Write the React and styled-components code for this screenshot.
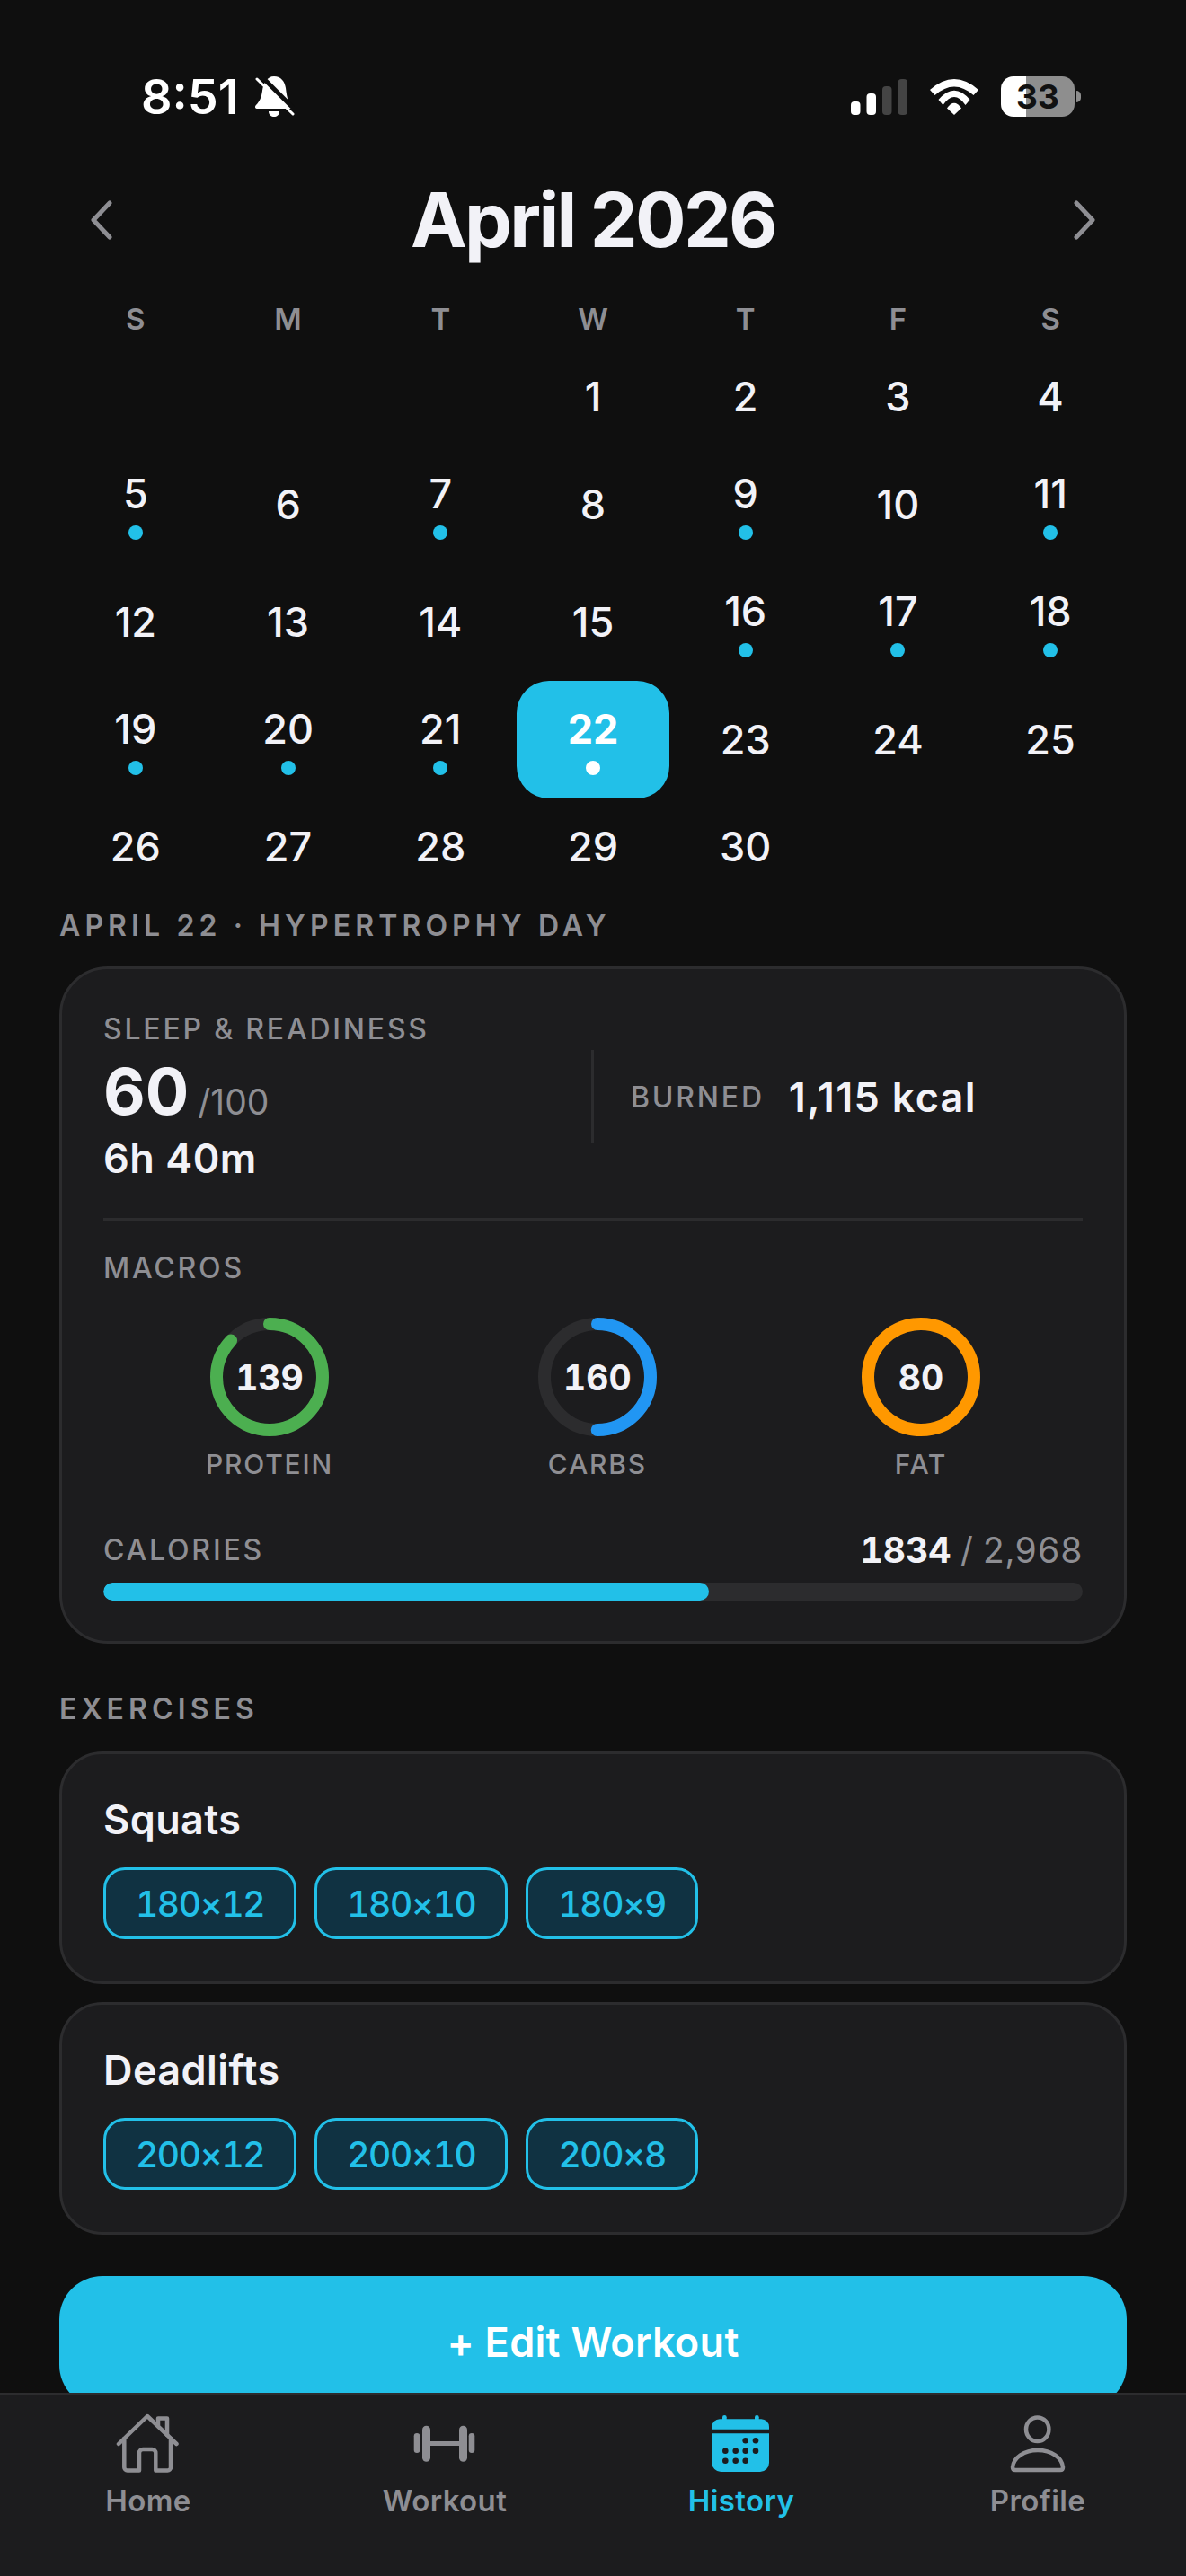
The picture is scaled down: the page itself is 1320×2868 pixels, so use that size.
import React from 'react';
import styled, { createGlobalStyle } from 'styled-components';

const ACCENT = '#22c0e8';
const MUTED = '#8e8e93';
const TEXT = '#f2f2f7';
const CARD = '#1c1c1e';
const LINE = '#2c2c2e';

const GlobalStyle = createGlobalStyle`
    html, body {
        margin: 0;
        padding: 0;
        background: #0f0f0f;
    }
    * {
        box-sizing: border-box;
    }
`

const Page = styled.div`
    position: relative;
    width: 1320px;
    height: 2868px;
    overflow: hidden;
    background: #0f0f0f;
    color: ${TEXT};
    font-family: Inter, "Liberation Sans", sans-serif;
`

const StatusBar = styled.div`
    display: flex;
    align-items: center;
    height: 131px;
    padding: 84px 124px 0 157px;
    color: #fff;
`

const Time = styled.span`
    font-size: 54px;
    line-height: 47px;
    font-weight: 600;
    margin-right: 18px;
`

const StatusIcons = styled.div`
    display: flex;
    align-items: center;
    gap: 25px;
    margin-left: auto;
`

const Battery = styled.div`
    position: relative;
    display: flex;
    align-items: center;
    justify-content: center;
    width: 82px;
    height: 45px;
    border-radius: 14px;
    background: linear-gradient(90deg, #fff 34%, #8e8e8e 34%);
    color: #111;
    font-size: 37px;
    font-weight: 700;

    &::after {
        content: '';
        position: absolute;
        right: -7px;
        top: 16px;
        width: 5px;
        height: 13px;
        border-radius: 0 5px 5px 0;
        background: #8e8e8e;
    }
`

const Content = styled.main`
    padding: 0 66px;
`

const MonthHeader = styled.header`
    display: flex;
    align-items: center;
    justify-content: space-between;
    height: 100px;
    margin-top: 64px;
    padding: 0 34px;
`

const MonthTitle = styled.h1`
    margin: 0;
    font-size: 84px;
    line-height: 100px;
    font-weight: 700;
    letter-spacing: -2.7px;
`

const WeekRow = styled.div`
    display: grid;
    grid-template-columns: repeat(7, 1fr);
    margin-top: 40px;
    text-align: center;
    color: ${MUTED};
    font-size: 33px;
    line-height: 40px;
    font-weight: 600;
`

const DayGrid = styled.div`
    display: grid;
    grid-template-columns: repeat(7, 1fr);
    margin-top: 13px;
`

const DayCell = styled.div`
    display: flex;
    flex-direction: column;
    align-items: center;
    justify-content: center;
    gap: 8px;
    padding: 27px 0;
    border-radius: 36px;
    background: ${p => (p.$selected ? ACCENT : 'transparent')};
    color: ${p => (p.$selected ? '#fff' : TEXT)};
    font-size: 45px;
    line-height: 54px;
    font-weight: ${p => (p.$selected ? 700 : 500)};
`

const DayDot = styled.span`
    width: 16px;
    height: 16px;
    margin-bottom: -1px;
    border-radius: 50%;
    background: ${p => (p.$selected ? '#fff' : ACCENT)};
`

const SectionLabel = styled.div`
    margin-top: ${p => p.$top}px;
    color: ${MUTED};
    font-size: 32px;
    line-height: 40px;
    font-weight: 600;
    letter-spacing: 5.1px;
`

const Card = styled.section`
    margin-top: ${p => p.$top}px;
    padding: ${p => p.$pad || 46}px 46px ${p => p.$padBottom || 45}px;
    background: ${CARD};
    border: 3px solid ${LINE};
    border-radius: ${p => p.$radius}px;
`

const CardLabel = styled.div`
    color: ${MUTED};
    font-size: 32px;
    line-height: 40px;
    font-weight: 500;
    letter-spacing: 2.8px;
`

const SleepRow = styled.div`
    display: flex;
    align-items: flex-start;
    margin-top: 6px;
`

const SleepBlock = styled.div`
    flex: 0 0 543px;
`

const Score = styled.div`
    display: flex;
    align-items: baseline;
    gap: 10px;
    height: 86px;
    font-size: 72px;
    line-height: 86px;
    font-weight: 700;

    span {
        color: ${MUTED};
        font-size: 39px;
        line-height: 1;
        font-weight: 400;
    }
`

const BigValue = styled.div`
    font-size: 45px;
    line-height: 54px;
    font-weight: 600;
    letter-spacing: ${p => p.$spacing || 0}px;
    margin-top: ${p => p.$top || 0}px;
`

const VerticalRule = styled.div`
    flex: none;
    width: 3px;
    height: 104px;
    margin-top: -3px;
    background: ${LINE};
`

const BurnedBlock = styled.div`
    flex: 1;
    display: flex;
    align-items: center;
    gap: 27px;
    height: 104px;
    padding-left: 41px;
    margin-top: -2px;
`

const Rule = styled.div`
    height: 3px;
    margin: 39px 0 33px;
    background: ${LINE};
`

const Rings = styled.div`
    display: flex;
    justify-content: space-around;
    margin-top: 35px;
`

const RingItem = styled.div`
    display: flex;
    flex-direction: column;
    align-items: center;
`

const RingBox = styled.div`
    position: relative;
    width: 132px;
    height: 132px;
`

const RingValue = styled.div`
    position: absolute;
    inset: 0;
    display: flex;
    align-items: center;
    justify-content: center;
    font-size: 39px;
    font-weight: 700;
    font-variant-numeric: tabular-nums;
`

const RingLabel = styled.div`
    margin-top: 13px;
    color: ${MUTED};
    font-size: 30px;
    line-height: 36px;
    font-weight: 500;
    letter-spacing: 1.8px;
`

const CaloriesRow = styled.div`
    display: flex;
    align-items: center;
    justify-content: space-between;
    margin-top: 58px;
`

const CaloriesValue = styled.div`
    color: ${MUTED};
    font-size: 39px;
    line-height: 40px;
    font-weight: 400;
    font-variant-numeric: tabular-nums;

    b {
        color: ${TEXT};
        font-weight: 700;
    }
`

const Track = styled.div`
    height: 20px;
    margin-top: 16px;
    border-radius: 10px;
    overflow: hidden;
    background: ${LINE};
`

const TrackFill = styled.div`
    height: 100%;
    border-radius: 10px;
    background: ${ACCENT};
`

const ExerciseName = styled.div`
    font-size: 45px;
    line-height: 54px;
    font-weight: 600;
    letter-spacing: 0.4px;
`

const Chips = styled.div`
    display: flex;
    gap: 20px;
    margin-top: 26px;
`

const Chip = styled.div`
    display: flex;
    align-items: center;
    height: 80px;
    padding: 0 33px;
    border: 3px solid ${ACCENT};
    border-radius: 24px;
    background: #103242;
    color: ${ACCENT};
    font-size: 39px;
    font-weight: 500;
    font-variant-numeric: tabular-nums;
    letter-spacing: -1.4px;
`

const EditButton = styled.button`
    display: block;
    width: 100%;
    height: 147px;
    margin-top: 46px;
    padding: 0;
    border: none;
    border-radius: 48px;
    background: ${ACCENT};
    color: #fff;
    font-family: inherit;
    font-size: 45px;
    font-weight: 600;
    letter-spacing: 0.3px;
`

const TabBar = styled.nav`
    position: absolute;
    left: 0;
    right: 0;
    bottom: 0;
    display: grid;
    grid-template-columns: repeat(4, 1fr);
    height: 204px;
    padding-top: 17px;
    background: ${CARD};
    border-top: 3px solid ${LINE};
`

const Tab = styled.div`
    display: flex;
    flex-direction: column;
    align-items: center;
    color: ${p => (p.$active ? ACCENT : MUTED)};
    font-size: 33px;
    line-height: 40px;
    font-weight: 600;
    letter-spacing: 0.4px;

    span {
        margin-top: 8px;
    }
`

const Chevron = ({ flip }) => (
    <svg width="26" height="44" viewBox="0 0 26 44" fill="none" stroke={MUTED} strokeWidth="5" strokeLinecap="round" strokeLinejoin="round">
        <path d={flip ? 'M4 3l18 19L4 41' : 'M22 3L4 22l18 19'} />
    </svg>
);

const BellOff = () => (
    <svg width="44" height="47" viewBox="0 0 44 47">
        <path fill="#fff" d="M21 1c8 0 12 6 13 13 1 8 2 15 6 19 2 2 1 4-1 4H3c-3 0-4-2-2-4 4-4 6-9 7-16C9 9 13 1 21 1z" />
        <path fill="#fff" d="M15 40h12c0 4-3 6-6 6s-6-2-6-6z" />
        <path stroke="#0f0f0f" strokeWidth="5" d="M6 0l41 41" />
        <path stroke="#fff" strokeWidth="3" strokeLinecap="round" d="M2 4l40 39" />
    </svg>
);

const Signal = () => (
    <svg width="63" height="40" viewBox="0 0 63 40">
        <rect x="0" y="25" width="10.5" height="15" rx="4" fill="#fff" />
        <rect x="17.5" y="16" width="10.5" height="24" rx="4" fill="#fff" />
        <rect x="35" y="8" width="10.5" height="32" rx="4" fill="#444" />
        <rect x="52.5" y="0" width="10.5" height="40" rx="4" fill="#444" />
    </svg>
);

const Wifi = () => (
    <svg width="54" height="40" viewBox="0 0 54 40" fill="#fff">
        <path d="M0 12Q27-12 54 12L48.500 18Q27-1 5.500 18Z" />
        <path d="M9.500 23Q27 2.400 44.500 23L39.500 29Q27 11 14.500 29Z" />
        <path d="M19 32.500Q27 21 35 32.500L27 40Z" />
    </svg>
);

const HomeIcon = () => (
    <svg width="72" height="72" viewBox="0 0 72 72" fill="none" stroke={MUTED} strokeWidth="4.500" strokeLinecap="round" strokeLinejoin="round">
        <path d="M3 37L35 6l32.500 31" />
        <path d="M9.300 31v32a3.500 3.500 0 0 0 3.500 3.500H26V47a4 4 0 0 1 4-4h10.300a4 4 0 0 1 4 4v19.500h13.200a3.500 3.500 0 0 0 3.500-3.500V31" />
        <path d="M47 16V8.500h10V27" />
    </svg>
);

const DumbbellIcon = () => (
    <svg width="72" height="72" viewBox="0 0 72 72" fill={MUTED}>
        <rect x="1.700" y="25" width="6.600" height="22" rx="3.300" />
        <rect x="11" y="16.700" width="9" height="40" rx="4.500" />
        <rect x="20" y="34" width="32" height="5" />
        <rect x="52" y="16.700" width="9" height="40" rx="4.500" />
        <rect x="62.700" y="25" width="6.600" height="22" rx="3.300" />
    </svg>
);

const CalendarIcon = () => {
    const dots = [[40.7, 33.3], [52, 33.3], [18.3, 44.7], [29.7, 44.7], [40.7, 44.7], [52, 44.7], [18.3, 55.7], [29.7, 55.7], [40.7, 55.7]];
    return (
        <svg width="72" height="72" viewBox="0 0 72 72" fill={ACCENT}>
            <rect x="15" y="5" width="4.700" height="8" rx="2.300" />
            <rect x="51" y="5" width="4.700" height="8" rx="2.300" />
            <path d="M3.300 20.700V18a8.700 8.700 0 0 1 8.700-8.700h46.300A8.700 8.700 0 0 1 67 18v2.700z" />
            <path d="M3.300 25.300H67V58a10 10 0 0 1-10 10H13.300a10 10 0 0 1-10-10z" />
            {dots.map(([x, y]) => <circle key={`${x}-${y}`} cx={x} cy={y} r="3.300" fill={CARD} />)}
        </svg>
    );
};

const ProfileIcon = () => (
    <svg width="72" height="72" viewBox="0 0 72 72" fill="none" stroke={MUTED} strokeWidth="4.500" strokeLinejoin="round">
        <ellipse cx="35.700" cy="20.700" rx="12.700" ry="13.300" />
        <path d="M8 63C9 52 21 44 36 44s27 8 28 19c0 2-1 3-3 3H11c-2 0-3-1-3-3z" />
    </svg>
);

const Ring = ({ pct, color }) => {
    const r = 59;
    const full = 2 * Math.PI * r;
    return (
        <svg width="132" height="132" viewBox="0 0 132 132" fill="none" strokeWidth="14">
            <circle cx="66" cy="66" r={r} stroke={LINE} />
            <circle
                cx="66"
                cy="66"
                r={r}
                stroke={color}
                strokeLinecap="round"
                strokeDasharray={`${full * pct} ${full}`}
                transform="rotate(-90 66 66)"
            />
        </svg>
    );
};

const weekDays = ['S', 'M', 'T', 'W', 'T', 'F', 'S'];
const workoutDays = [5, 7, 9, 11, 16, 17, 18, 19, 20, 21, 22];
const days = [null, null, null, ...Array.from({ length: 30 }, (_, i) => i + 1)];

const macros = [
    { label: 'PROTEIN', value: 139, pct: 0.869, color: '#4caf50' },
    { label: 'CARBS', value: 160, pct: 0.5, color: '#2196f3' },
    { label: 'FAT', value: 80, pct: 1, color: '#ff9800' },
];

const exercises = [
    { name: 'Squats', sets: ['180×12', '180×10', '180×9'] },
    { name: 'Deadlifts', sets: ['200×12', '200×10', '200×8'] },
];

const tabs = [
    { label: 'Home', icon: <HomeIcon /> },
    { label: 'Workout', icon: <DumbbellIcon /> },
    { label: 'History', icon: <CalendarIcon />, active: true },
    { label: 'Profile', icon: <ProfileIcon /> },
];

const App = () => {
    return (
        <Page>
            <GlobalStyle />
            <StatusBar>
                <Time>8:51</Time>
                <BellOff />
                <StatusIcons>
                    <Signal />
                    <Wifi />
                    <Battery>33</Battery>
                </StatusIcons>
            </StatusBar>
            <Content>
                <MonthHeader>
                    <Chevron />
                    <MonthTitle>April 2026</MonthTitle>
                    <Chevron flip />
                </MonthHeader>
                <WeekRow>
                    {weekDays.map((d, i) => <div key={i}>{d}</div>)}
                </WeekRow>
                <DayGrid>
                    {days.map((d, i) => {
                        if (!d) return <div key={i} />;
                        const selected = d === 22;
                        return (
                            <DayCell key={i} $selected={selected}>
                                {d}
                                {workoutDays.includes(d) && <DayDot $selected={selected} />}
                            </DayCell>
                        );
                    })}
                </DayGrid>
                <SectionLabel $top={14}>APRIL 22 · HYPERTROPHY DAY</SectionLabel>
                <Card $top={25} $radius={54} $pad={47}>
                    <CardLabel>SLEEP &amp; READINESS</CardLabel>
                    <SleepRow>
                        <SleepBlock>
                            <Score>60<span>/100</span></Score>
                            <BigValue $top={5} $spacing={0.5}>6h 40m</BigValue>
                        </SleepBlock>
                        <VerticalRule />
                        <BurnedBlock>
                            <CardLabel>BURNED</CardLabel>
                            <BigValue $spacing={1.3}>1,115 kcal</BigValue>
                        </BurnedBlock>
                    </SleepRow>
                    <Rule />
                    <CardLabel>MACROS</CardLabel>
                    <Rings>
                        {macros.map(m => (
                            <RingItem key={m.label}>
                                <RingBox>
                                    <Ring pct={m.pct} color={m.color} />
                                    <RingValue>{m.value}</RingValue>
                                </RingBox>
                                <RingLabel>{m.label}</RingLabel>
                            </RingItem>
                        ))}
                    </Rings>
                    <CaloriesRow>
                        <CardLabel>CALORIES</CardLabel>
                        <CaloriesValue><b>1834</b> / 2,968</CaloriesValue>
                    </CaloriesRow>
                    <Track>
                        <TrackFill style={{ width: `${(1834 / 2968) * 100}%` }} />
                    </Track>
                </Card>
                <SectionLabel $top={53}>EXERCISES</SectionLabel>
                {exercises.map((ex, i) => (
                    <Card key={ex.name} $top={i === 0 ? 27 : 20} $radius={48} $padBottom={47}>
                        <ExerciseName>{ex.name}</ExerciseName>
                        <Chips>
                            {ex.sets.map(s => <Chip key={s}>{s}</Chip>)}
                        </Chips>
                    </Card>
                ))}
                <EditButton>+ Edit Workout</EditButton>
            </Content>
            <TabBar>
                {tabs.map(t => (
                    <Tab key={t.label} $active={t.active}>
                        {t.icon}
                        <span>{t.label}</span>
                    </Tab>
                ))}
            </TabBar>
        </Page>
    );
};

export default App;
